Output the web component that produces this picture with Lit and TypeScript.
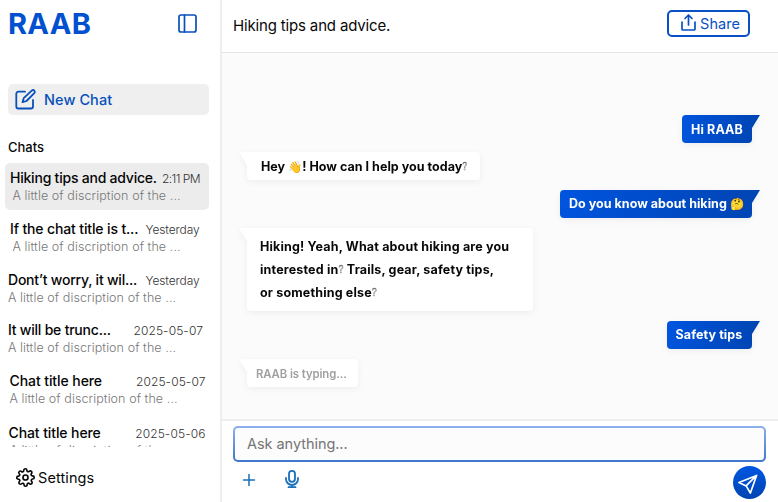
import { LitElement, html, css, svg } from "lit";
import { customElement, property } from "lit/decorators.js";
import { classMap } from "lit/directives/class-map.js";

interface Chat { title: string; date: string; x: number; dx: number; right: number; ls: number; dls: number; top: number; active?: boolean }

const chats: Chat[] = [
  { title: "Hiking tips and advice.", date: "2:11 PM", x: 5, dx: 7.5, right: 9, ls: -0.22, dls: -0.55, top: 6, active: true },
  { title: "If the chat title is t...", date: "Yesterday", x: 5, dx: 7.5, right: 9.5, ls: -0.14, dls: -0.12, top: 6 },
  { title: "Dont’t worry, it wil...", date: "Yesterday", x: 3, dx: 3, right: 9.5, ls: -0.22, dls: -0.12, top: 5.5 },
  { title: "It will be trunc...", date: "2025-05-07", x: 3, dx: 3, right: 6, ls: -0.22, dls: 0.1, top: 5 },
  { title: "Chat title here", date: "2025-05-07", x: 4.5, dx: 4.5, right: 3.5, ls: -0.08, dls: 0.1, top: 5 },
  { title: "Chat title here", date: "2025-05-06", x: 3.5, dx: 4.5, right: 3.5, ls: -0.1, dls: 0.1, top: 6 },
];

@customElement("chat-item")
class ChatItem extends LitElement {
  @property({ attribute: false }) chat!: Chat;
  static styles = css`
    :host { display: block; height: 51px; flex: none; }
    .card { height: 47px; width: 204px; box-sizing: border-box; border-radius: 5px; }
    .active { background: #ececec; }
    .row { display: flex; justify-content: space-between; align-items: baseline; height: 18px; line-height: 18px; white-space: nowrap; }
    .title { font-size: 14px; font-weight: 500; color: #050505; }
    .date { font-size: 12px; font-weight: 300; color: #333; }
    .desc { font-size: 12.5px; font-weight: 300; color: #777; line-height: 18px; white-space: nowrap; letter-spacing: 0.08px; }
  `;
  render() {
    const c = this.chat;
    return html`<div class=${classMap({ card: true, active: !!c.active })} style="padding-top:${c.top}px">
      <div class="row" style="padding-left:${c.x}px;padding-right:${c.right}px">
        <span class="title" style="letter-spacing:${c.ls}px">${c.title}</span><span class="date" style="letter-spacing:${c.dls}px">${c.date}</span>
      </div>
      <div class="desc" style="padding-left:${c.dx}px">A little of discription of the ...</div>
    </div>`;
  }
}

@customElement("chat-bubble")
class ChatBubble extends LitElement {
  @property({ type: Boolean, reflect: true }) mine = false;
  static styles = css`
    :host { display: block; width: fit-content; filter: drop-shadow(0 2px 3px rgba(0, 0, 0, 0.05)); }
    :host([mine]) { align-self: flex-end; }
    .bubble { position: relative; border-radius: 4px; background: #fff; }
    .tail { position: absolute; top: 0; left: -8px; width: 16px; height: 13px; background: #fff; clip-path: polygon(0 0, 100% 0, 100% 100%, 8px 100%); }
    :host([mine]) .bubble { background: linear-gradient(100deg, #0054de, #0045b4); border-top-right-radius: 0; }
    :host([mine]) .tail { left: auto; right: -8px; width: 8px; background: #0045b4; clip-path: polygon(0 0, 100% 0, 0 100%); }
    .content { position: relative; }
  `;
  render() {
    return html`<div class="bubble"><div class="tail"></div><div class="content"><slot></slot></div></div>`;
  }
}

const panelIcon = svg`<rect x="1" y="1" width="17" height="17" rx="2"/><path d="M6.5 1v17"/>`;

@customElement("app-root")
class AppRoot extends LitElement {
  static styles = css`
    :host { display: flex; width: 778px; height: 502px; overflow: hidden; background: #fff; color: #080808; font-family: Inter, "Liberation Sans", sans-serif; }
    * { box-sizing: border-box; }
    svg { display: block; flex: none; fill: none; stroke: currentColor; stroke-linecap: round; stroke-linejoin: round; overflow: visible; }
    aside { width: 222px; flex: none; border-right: 2px solid #eee; display: flex; flex-direction: column; }
    .brand { height: 84px; padding: 8px 23px 0 8px; display: flex; justify-content: space-between; color: #0050d0; }
    .logo { font-size: 29px; line-height: 32px; font-weight: 700; letter-spacing: 0.3px; }
    .brand svg { margin-top: 6px; stroke-width: 1.7; color: #0850ba; }
    .new { height: 31px; width: 201px; flex: none; margin-left: 8px; border-radius: 5px; background: #efefef; display: flex; align-items: center; padding-left: 7px; gap: 8px; color: #0850ba; font-size: 14.5px; font-weight: 500; letter-spacing: 0.07px; }
    .label { height: 48px; flex: none; padding: 23px 0 0 8px; font-size: 13px; line-height: 18px; font-weight: 500; }
    .list { margin-left: 5px; height: 284px; overflow: hidden; flex: none; display: flex; flex-direction: column; }
    .settings { display: flex; align-items: center; gap: 3px; height: 24px; margin-top: 18.5px; padding-left: 16px; font-size: 14.5px; letter-spacing: 0.1px; }
    main { flex: 1; min-width: 0; display: flex; flex-direction: column; }
    header { height: 53px; flex: none; border-bottom: 1px solid #e4e4e4; display: flex; justify-content: space-between; padding: 10px 28px 0 11px; }
    header h1 { margin: 0; font-size: 15px; line-height: 31px; font-weight: 400; letter-spacing: -0.16px; }
    .share { width: 83px; height: 27px; border: 2px solid #0850c4; border-radius: 5px; display: flex; align-items: center; padding-left: 11.5px; gap: 4.5px; color: #0850c4; font-size: 14.5px; letter-spacing: 0.08px; }
    .share svg { margin-top: -2px; }
    .messages { height: 366px; flex: none; background: #fbfbfb; display: flex; flex-direction: column; padding: 62px 26px 0 25px; font-size: 12.5px; font-weight: 700; white-space: nowrap; }
    .msg { height: 28px; line-height: 28px; }
    .m1 { width: 70px; padding: 1px 0 0 9px; color: #fff; letter-spacing: 0.12px; }
    .m2 { width: 233px; padding: 1px 0 0 14px; letter-spacing: 0.03px; }
    .m3 { width: 192px; padding-left: 9px; color: #fff; letter-spacing: 0.03px; }
    .m4 { width: 286px; height: 83px; padding: 6.5px 0 0 13px; line-height: 23px; letter-spacing: 0.17px; }
    .m5 { width: 85px; padding-left: 8.5px; color: #fff; letter-spacing: 0.1px; }
    .m6 { width: 111px; padding: 1px 0 0 9px; font-size: 11.3px; font-weight: 600; color: #a0a0a0; letter-spacing: -0.07px; }
    .g1 { margin-top: 9px; } .g3 { margin-top: 10px; } .g4 { margin-top: 10px; }
    .q { font-weight: 400; font-size: 10px; line-height: 0; color: #fff; -webkit-text-stroke: 0.4px #555; vertical-align: 1px; }
    .hand { font-size: 11.5px; line-height: 0; }
    footer { flex: 1; border-top: 2px solid #eee; padding: 5px 12px 0 11px; }
    .input { height: 36px; border-radius: 5px; padding: 2px; background: linear-gradient(#8db0f0, #3f75cb); }
    .field { height: 32px; border-radius: 3px; background: #fcfcfc; line-height: 32px; padding-left: 12px; color: #757575; font-size: 14.5px; letter-spacing: -0.05px; }
    .tools { display: flex; padding-left: 9.5px; color: #1a6fbb; align-items: flex-start; }
    .plus { margin-top: 12px; } .mic { margin: 8px 0 0 30.5px; }
    .send { margin: 4px 0 0 auto; width: 33px; height: 33px; border-radius: 50%; background: linear-gradient(#0057e3, #0044b1); color: #fff; display: flex; align-items: center; justify-content: center; }
    .send svg { margin: 3px 3px 0 0; }
  `;
  render() {
    return html`
      <aside>
        <div class="brand"><span class="logo">RAAB</span><svg width="19" height="19" viewBox="0 0 19 19">${panelIcon}</svg></div>
        <div class="new"><svg width="21" height="21" viewBox="0 0 21 21" stroke-width="1.8"><path d="M10 2.7H3.3A2 2 0 0 0 1.3 4.7V17.5a2 2 0 0 0 2 2H16a2 2 0 0 0 2-2V11M17 1.4a1.8 1.8 0 0 1 2.5 2.5L11.5 12l-4 1.2 1.2-4z"/></svg>New Chat</div>
        <div class="label">Chats</div>
        <div class="list">${chats.map((c) => html`<chat-item .chat=${c}></chat-item>`)}</div>
        <div class="settings"><svg width="19" height="19" viewBox="0 0 24 24" stroke-width="2.1"><circle cx="12" cy="12" r="3.2"/><path d="M19.4 15a1.65 1.65 0 0 0 .33 1.82l.06.06a2 2 0 1 1-2.83 2.83l-.06-.06a1.65 1.65 0 0 0-2.8 1.17V21a2 2 0 0 1-4 0v-.09a1.65 1.65 0 0 0-2.9-1.08l-.06.06a2 2 0 1 1-2.83-2.83l.06-.06a1.65 1.65 0 0 0-1.17-2.8H3a2 2 0 0 1 0-4h.09a1.65 1.65 0 0 0 1.08-2.9l-.06-.06a2 2 0 1 1 2.83-2.83l.06.06a1.65 1.65 0 0 0 2.8-1.17V3a2 2 0 0 1 4 0v.09a1.65 1.65 0 0 0 2.8 1.17l.06-.06a2 2 0 1 1 2.83 2.83l-.06.06a1.65 1.65 0 0 0 1.17 2.8H21a2 2 0 0 1 0 4h-.09a1.65 1.65 0 0 0-1.51 1.11z"/></svg>Settings</div>
      </aside>
      <main>
        <header><h1>Hiking tips and advice.</h1>
          <div class="share"><svg width="15" height="17" viewBox="0 0 15 17" stroke-width="1.7"><path d="M1 8v7a1 1 0 0 0 1 1h11a1 1 0 0 0 1-1V8M7.5 11V1M4 4.5 7.5 1 11 4.5"/></svg>Share</div>
        </header>
        <section class="messages">
          <chat-bubble mine><div class="msg m1">Hi RAAB</div></chat-bubble>
          <chat-bubble class="g1"><div class="msg m2">Hey <span class="hand">👋</span>! How can I help you today<span class="q">?</span></div></chat-bubble>
          <chat-bubble mine class="g3"><div class="msg m3">Do you know about hiking <span class="hand">🤔</span></div></chat-bubble>
          <chat-bubble class="g3"><div class="msg m4">Hiking! Yeah, What about hiking are you<br>interested in<span class="q">?</span> Trails, gear, safety tips,<br>or something else<span class="q">?</span></div></chat-bubble>
          <chat-bubble mine class="g4"><div class="msg m5">Safety tips</div></chat-bubble>
          <chat-bubble class="g3"><div class="msg m6">RAAB is typing...</div></chat-bubble>
        </section>
        <footer>
          <div class="input"><div class="field">Ask anything...</div></div>
          <div class="tools">
            <svg class="plus" width="12" height="12" viewBox="0 0 12 12" stroke-width="1.5"><path d="M6 .5v11M.5 6h11"/></svg>
            <svg class="mic" width="14" height="18" viewBox="0 0 14 18" stroke-width="1.8"><rect x="4" y=".8" width="6" height="11" rx="3"/><path d="M1 8v1a6 6 0 0 0 12 0V8M7 15v2.2M3.5 17.2h7"/></svg>
            <div class="send"><svg width="20" height="20" viewBox="0 0 21 21" stroke-width="1.8"><path d="M19.5 1.5 1 9l7.5 3.5L13 20zM19.5 1.5 8.500 12.5"/></svg></div>
          </div>
        </footer>
      </main>`;
  }
}
